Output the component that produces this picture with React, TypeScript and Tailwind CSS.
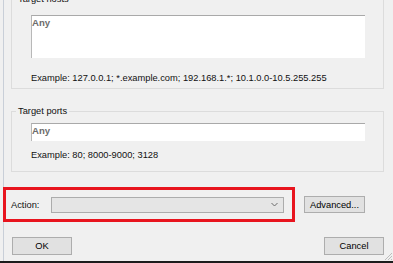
import React from "react";

const btn =
  "flex items-center justify-center bg-[#e1e1e1] border border-[#adadad] text-[9.3px] leading-[12px] text-black";

export default function App() {
  return (
    <div className="w-[393px] h-[263px] bg-[#f0f0f0] overflow-hidden flex flex-col relative font-['Liberation_Sans',Arial,sans-serif] text-[#111111]">
      <div className="flex-1 pl-[3px] flex min-h-0">
        <div className="flex-1 border-l border-[#c9cfd8] flex flex-col">
          {/* Target hosts */}
          <fieldset className="mt-[-7px] ml-[7px] w-[373px] border border-[#dcdcdc] p-0 m-0">
            <legend className="ml-[4px] px-[2px] text-[9.3px] leading-[12px]">Target hosts</legend>
            <div className="pl-[19px] pr-[18px] pb-[4px]">
              <div className="mt-[10px] h-[43px] bg-white border-t border-l border-t-[#a9a9a9] border-l-[#b8b8b8] pt-[1px]">
                <div className="text-[9.6px] leading-[12px] font-bold text-[#6c6c6c]">Any</div>
              </div>
              <div className="mt-[14px] text-[9.3px] leading-[12px]">
                Example: 127.0.0.1; *.example.com; 192.168.1.*; 10.1.0.0-10.5.255.255
              </div>
            </div>
          </fieldset>

          {/* Target ports */}
          <fieldset className="mt-[16px] ml-[7px] w-[373px] border border-[#dcdcdc] p-0 m-0">
            <legend className="ml-[4px] px-[2px] text-[9.3px] leading-[12px]">Target ports</legend>
            <div className="pl-[19px] pr-[18px] pb-[10px]">
              <div className="mt-[6px] h-[18px] bg-white border-t border-l border-t-[#a9a9a9] border-l-[#b8b8b8] pt-[1px]">
                <div className="text-[9.6px] leading-[12px] font-bold text-[#6c6c6c]">Any</div>
              </div>
              <div className="mt-[8px] text-[9.3px] leading-[12px]">Example: 80; 8000-9000; 3128</div>
            </div>
          </fieldset>

          {/* Action row */}
          <div className="mt-[15px] ml-[-1px] flex items-center">
            <div className="w-[292px] h-[35px] border-[3px] border-[#e8141e] flex items-center pl-[5px]">
              <div className="w-[40px] text-[9.3px] leading-[12px]">Action:</div>
              <div className="w-[233px] h-[16px] bg-[#e5e5e5] border border-[#acacac] flex items-center justify-end pr-[5px]">
                <svg width="7" height="5" viewBox="0 0 7 5">
                  <polyline points="0.5,1 3.5,4 6.5,1" fill="none" stroke="#6a6a6a" strokeWidth="1" />
                </svg>
              </div>
            </div>
            <div className={`${btn} ml-[9px] w-[61px] h-[17px]`}>Advanced...</div>
          </div>

          {/* Buttons */}
          <div className="mt-[15px] flex justify-between">
            <div className={`${btn} ml-[8px] w-[60px] h-[18px]`}>OK</div>
            <div className={`${btn} mr-[9px] w-[60px] h-[18px]`}>Cancel</div>
          </div>
        </div>
      </div>
      <div className="h-[2px] bg-[#1c1c1c] shrink-0" />
      <svg className="absolute right-[1px] bottom-[3px]" width="8" height="8" viewBox="0 0 8 8">
        <line x1="1" y1="8" x2="8" y2="1" stroke="#b0b0b0" strokeWidth="0.8" />
        <line x1="4" y1="8" x2="8" y2="4" stroke="#b0b0b0" strokeWidth="0.8" />
        <line x1="7" y1="8" x2="8" y2="7" stroke="#b0b0b0" strokeWidth="0.8" />
      </svg>
    </div>
  );
}
